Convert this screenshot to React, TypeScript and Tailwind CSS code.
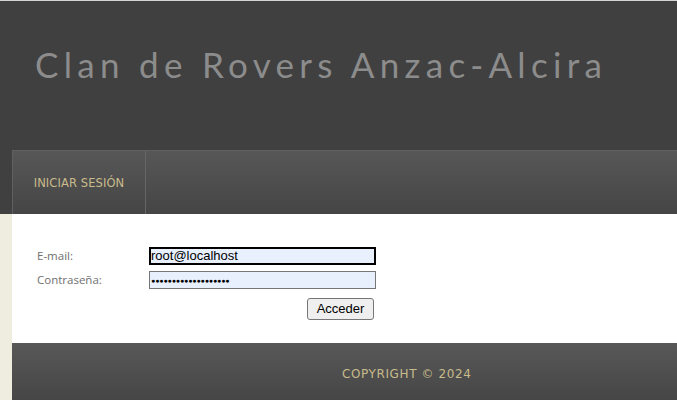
export default function App() {
  return (
    <div className="min-h-[400px] w-[677px] overflow-hidden bg-[#efede0]">
      <div className="h-px bg-[#d4d4d4]" />
      <header className="h-[149px] bg-[#404040] pl-[35px] pt-[41px]">
        <h1 className="font-['Lato',sans-serif] text-[35px] font-normal leading-[44px] tracking-[5.3px] text-[#8c8c8c]">
          Clan de Rovers Anzac-Alcira
        </h1>
      </header>
      <div className="flex">
        <div className="w-[12px] shrink-0">
          <div className="h-[64px] bg-[#404040]" />
        </div>
        <div className="flex-1">
          <nav className="flex h-[64px] border-l border-t border-[#606060] bg-[linear-gradient(180deg,#575757,#454545)]">
            <a className="flex w-[133px] items-center justify-center border-r border-[#666] pt-[3px] font-['DejaVu_Sans',sans-serif] text-[11.5px] tracking-[0.1px] text-[#c9bb8c]">
              INICIAR SESIÓN
            </a>
          </nav>
          <main className="h-[129px] bg-white pl-[25px] pt-[32px] font-['Open_Sans',sans-serif] text-[11.5px] text-[#707070]">
            <div className="flex h-[19px] items-center">
              <span className="w-[112px]">E-mail:</span>
              <div className="flex h-[18px] w-[227px] items-center border-2 border-black bg-[#e8f0fe] font-['Liberation_Sans',sans-serif] text-[13px] text-black">
                root@localhost
              </div>
            </div>
            <div className="mt-[6px] flex h-[18px] items-center">
              <span className="w-[112px]">Contraseña:</span>
              <div className="flex h-[18px] w-[227px] items-center border border-[#767676] bg-[#e8f0fe] pl-[1px] font-['Liberation_Sans',sans-serif] text-[7px] leading-none tracking-[-0.1px] text-black">
                ●●●●●●●●●●●●●●●●●●●
              </div>
            </div>
            <div className="mt-[9px] flex w-[337px] justify-end">
              <button className="h-[22px] w-[67px] rounded-[3px] border border-[#767676] bg-[#efefef] font-['Liberation_Sans',sans-serif] text-[13px] text-black">
                Acceder
              </button>
            </div>
          </main>
          <footer className="flex h-[57px] items-center bg-[linear-gradient(180deg,#585858,#464646)] pl-[330px] pt-[5px] font-['DejaVu_Sans',sans-serif] text-[12px] tracking-[0.6px] text-[#c9bb8c]">
            COPYRIGHT © 2024
          </footer>
        </div>
      </div>
    </div>
  )
}
